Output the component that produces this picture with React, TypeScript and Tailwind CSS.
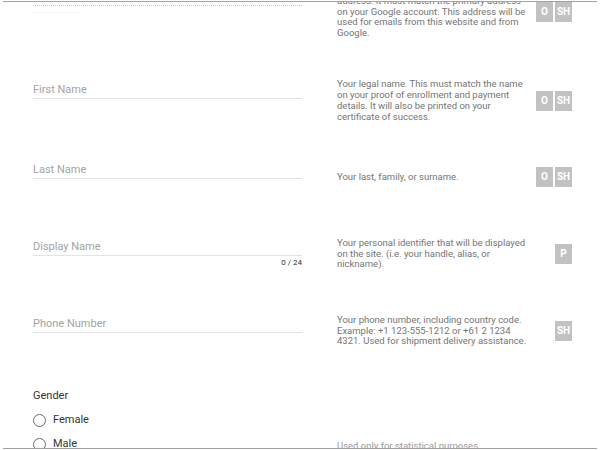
import React from "react";

function Badge({ label }: { label: string }) {
  return (
    <div className="w-[17px] h-[20px] bg-[#c2c2c2] text-white text-[10px] font-bold flex items-center justify-center leading-none">
      {label}
    </div>
  );
}

function Desc({ lines, badges }: { lines: string[]; badges: string[] }) {
  return (
    <div className="ml-[35px] w-[235px] flex items-center">
      <div className="w-[190px] text-[9.5px] leading-[10.8px] text-[#757575]">
        {lines.map((l, i) => (
          <div key={i} className="whitespace-nowrap">
            {l}
          </div>
        ))}
      </div>
      <div className="ml-auto flex gap-[2px]">
        {badges.map((b) => (
          <Badge key={b} label={b} />
        ))}
      </div>
    </div>
  );
}

function Field({ label, pt, counter }: { label: string; pt: string; counter?: string }) {
  return (
    <div className={`w-[269px] ${pt}`}>
      <div className="text-[11px] leading-[14px] text-[#a3a3a3] pb-[1px] border-b border-[#e3e3e3]">{label}</div>
      {counter && (
        <div className="mt-[2px] flex justify-end">
          <span className="text-[8px] leading-[10px] text-[#333]">{counter}</span>
        </div>
      )}
    </div>
  );
}

export default function App() {
  return (
    <div className="w-[600px] h-[450px] bg-white" style={{ fontFamily: "Roboto, 'Noto Sans', sans-serif" }}>
      <div className="mx-[3px] mt-[1px] h-[448px] border-y border-[#a3a3a3] overflow-hidden">
        <div className="-mt-[32px] pl-[30px]">
          {/* Email row */}
          <div className="h-[84px] flex items-center">
            <div className="w-[269px] self-start pt-[20px]">
              <div className="h-[14px] text-[11px] leading-[14px] text-[#bdbdbd]">&nbsp;</div>
              <div className="mt-[1px] border-b border-dotted border-[#c4c4c4]" />
              <div className="mt-[6px] h-[4px] w-[47px] border-t border-dotted border-[#eeeeee]" />
            </div>
            <Desc
              lines={[
                "Your email address. This is the primary",
                "address. It must match the primary address",
                "on your Google account. This address will be",
                "used for emails from this website and from",
                "Google.",
              ]}
              badges={["O", "SH"]}
            />
          </div>
          {/* First name */}
          <div className="h-[94px] flex items-center">
            <div className="self-start">
              <Field label="First Name" pt="pt-[29px]" />
            </div>
            <Desc
              lines={[
                "Your legal name. This must match the name",
                "on your proof of enrollment and payment",
                "details. It will also be printed on your",
                "certificate of success.",
              ]}
              badges={["O", "SH"]}
            />
          </div>
          {/* Last name */}
          <div className="h-[58px] flex items-center">
            <div className="self-start">
              <Field label="Last Name" pt="pt-[15px]" />
            </div>
            <Desc lines={["Your last, family, or surname."]} badges={["O", "SH"]} />
          </div>
          {/* Display name */}
          <div className="h-[96px] flex items-center">
            <div className="self-start">
              <Field label="Display Name" pt="pt-[34px]" counter="0 / 24" />
            </div>
            <Desc
              lines={[
                "Your personal identifier that will be displayed",
                "on the site. (i.e. your handle, alias, or",
                "nickname).",
              ]}
              badges={["P"]}
            />
          </div>
          {/* Phone */}
          <div className="h-[58px] flex items-center">
            <div className="self-start">
              <Field label="Phone Number" pt="pt-[15px]" />
            </div>
            <Desc
              lines={[
                "Your phone number, including country code.",
                "Example: +1 123-555-1212 or +61 2 1234",
                "4321. Used for shipment delivery assistance.",
              ]}
              badges={["SH"]}
            />
          </div>
          {/* Gender */}
          <div className="flex items-start">
            <div className="w-[269px] pt-[29px]">
              <div className="text-[11px] leading-[14px] text-[#333]">Gender</div>
              <div className="mt-[5px]">
                {["Female", "Male"].map((g) => (
                  <div key={g} className="h-[24px] flex items-center">
                    <div className="w-[13px] h-[13px] rounded-full border-[1.5px] border-[#6b6b6b]" />
                    <span className="ml-[7px] text-[11px] leading-[14px] text-[#333]">{g}</span>
                  </div>
                ))}
              </div>
            </div>
            <div className="ml-[35px] pt-[81px] text-[9.5px] leading-[10.8px] text-[#9a9a9a] whitespace-nowrap">
              Used only for statistical purposes.
            </div>
          </div>
        </div>
      </div>
    </div>
  );
}
